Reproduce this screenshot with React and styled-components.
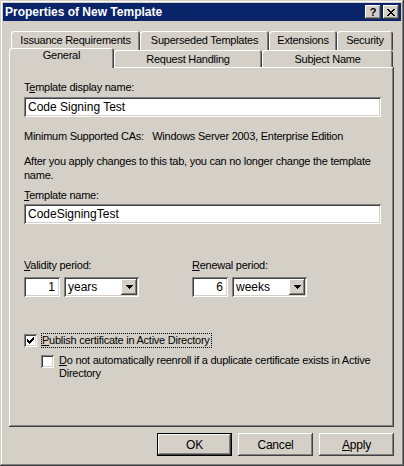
import React from 'react'
import styled, { createGlobalStyle, css } from 'styled-components'

const FACE = '#d4d0c8'
const SHADOW = '#808080'
const DARK = '#404040'
const FONT = '"Liberation Sans", Arial, sans-serif'

const GlobalStyle = createGlobalStyle`
  html, body {
    margin: 0;
    padding: 0;
    background: ${FACE};
  }
  * {
    box-sizing: border-box;
  }
`

const raised = css`
  box-shadow: inset -1px -1px ${DARK}, inset 1px 1px #fff,
    inset -2px -2px ${SHADOW}, inset 2px 2px ${FACE};
`

const sunken = css`
  box-shadow: inset 1px 1px ${SHADOW}, inset -1px -1px #fff,
    inset 2px 2px ${DARK}, inset -2px -2px ${FACE};
`

const Window = styled.div`
  width: 404px;
  height: 466px;
  padding: 3px;
  display: flex;
  flex-direction: column;
  background: ${FACE};
  font-family: ${FONT};
  font-size: 11px;
  letter-spacing: -0.25px;
  color: #000;
  box-shadow: inset -1px -1px ${DARK}, inset 1px 1px ${FACE},
    inset -2px -2px ${SHADOW}, inset 2px 2px #fff;
`

const TitleBar = styled.div`
  height: 18px;
  display: flex;
  align-items: center;
  padding: 0 2px 0 2px;
  background: #0a246a;
  color: #fff;
  font-weight: bold;
  font-size: 12px;
  letter-spacing: 0;
`

const Title = styled.span`
  flex: 1;
  white-space: nowrap;
`

const CaptionButton = styled.div`
  width: 16px;
  height: 14px;
  margin-left: ${(p) => (p.$gap ? '2px' : '0')};
  display: flex;
  align-items: center;
  justify-content: center;
  background: ${FACE};
  color: #000;
  font-weight: bold;
  font-size: 11px;
  line-height: 1;
  ${raised}
`

const Body = styled.div`
  flex: 1;
  display: flex;
  flex-direction: column;
  padding: 10px 7px 0 6px;
`

const TabStrip = styled.div`
  display: flex;
  flex-direction: column;
`

const TabRow = styled.div`
  display: flex;
  align-items: flex-end;
  height: ${(p) => p.$h}px;
  padding-left: ${(p) => p.$indent || 0}px;
`

const Tab = styled.div`
  width: ${(p) => p.$w}px;
  height: ${(p) => (p.$active ? 20 : p.$h)}px;
  display: flex;
  justify-content: center;
  align-items: flex-start;
  padding-top: ${(p) => (p.$active ? 1 : 3)}px;
  line-height: 13px;
  white-space: nowrap;
  background: ${FACE};
  border-radius: 3px 3px 0 0;
  box-shadow: inset 1px 1px #fff, inset -1px 0 ${DARK}, inset -2px 0 ${SHADOW};
  ${(p) =>
    p.$active &&
    css`
      position: relative;
      z-index: 2;
      margin-bottom: -1px;
    `}
`

const Panel = styled.div`
  height: 360px;
  display: flex;
  flex-direction: column;
  padding: 14px 12px 0 15px;
  background: ${FACE};
  box-shadow: inset -1px -1px ${DARK}, inset 1px 1px #fff,
    inset -2px -2px ${SHADOW};
`

const Label = styled.div`
  line-height: ${(p) => p.$lh || 13}px;
  margin-top: ${(p) => p.$mt || 0}px;
  white-space: ${(p) => (p.$wrap ? 'normal' : 'nowrap')};
`

const Key = styled.span`
  text-decoration: underline;
  text-underline-offset: 1px;
`

const TextField = styled.div`
  height: 20px;
  margin-top: ${(p) => p.$mt || 0}px;
  margin-right: 1px;
  width: ${(p) => (p.$w ? `${p.$w}px` : 'auto')};
  display: flex;
  align-items: center;
  justify-content: ${(p) => (p.$right ? 'flex-end' : 'flex-start')};
  padding: 0 ${(p) => (p.$right ? 5 : 4)}px 0 4px;
  background: #fff;
  font-size: 12px;
  letter-spacing: 0;
  ${sunken}
`

const PeriodRow = styled.div`
  display: flex;
  margin-top: 35px;
`

const PeriodGroup = styled.div`
  width: 168px;
  display: flex;
  flex-direction: column;
`

const Fields = styled.div`
  display: flex;
  gap: 3px;
  margin-top: 5px;
`

const Select = styled.div`
  width: 75px;
  height: 20px;
  display: flex;
  align-items: center;
  padding: 2px;
  background: #fff;
  font-size: 12px;
  letter-spacing: 0;
  ${sunken}
`

const SelectText = styled.span`
  flex: 1;
  padding-left: 2px;
`

const DropButton = styled.div`
  width: 16px;
  height: 16px;
  display: flex;
  align-items: center;
  justify-content: center;
  background: ${FACE};
  ${raised}
`

const CheckRow = styled.div`
  display: flex;
  align-items: flex-start;
  margin-top: ${(p) => p.$mt}px;
  padding-left: ${(p) => p.$indent || 0}px;
`

const Box = styled.div`
  width: 13px;
  height: 13px;
  flex: none;
  margin-top: ${(p) => p.$mt || 0}px;
  background: #fff;
  ${sunken}
`

const CheckText = styled.div`
  margin-left: ${(p) => p.$ml}px;
  line-height: ${(p) => p.$lh}px;
  &::first-letter {
    text-decoration: underline;
  }
  ${(p) =>
    p.$focus &&
    css`
      border: 1px dotted #000;
      padding: 0 1px 0 0;
    `}
`

const ButtonRow = styled.div`
  display: flex;
  justify-content: flex-end;
  gap: 6px;
  margin-top: 6px;
`

const Button = styled.div`
  width: 75px;
  height: 23px;
  display: flex;
  align-items: center;
  justify-content: center;
  background: ${FACE};
  font-size: 12px;
  letter-spacing: -0.2px;
  ${raised}
  ${(p) =>
    p.$default &&
    css`
      box-shadow: inset 0 0 0 1px #000, inset -2px -2px ${DARK},
        inset 2px 2px #fff, inset -3px -3px ${SHADOW};
    `}
`

const CheckMark = () => (
  <svg width="13" height="13" viewBox="0 0 13 13" shapeRendering="crispEdges">
    <path
      d="M3 5h1v3h-1z M4 6h1v3h-1z M5 7h1v3h-1z M6 6h1v3h-1z M7 5h1v3h-1z M8 4h1v3h-1z M9 3h1v3h-1z"
      fill="#000"
    />
  </svg>
)

const Arrow = () => (
  <svg width="7" height="4" viewBox="0 0 7 4" shapeRendering="crispEdges">
    <path d="M0 0h7v1h-1v1h-1v1h-1v1h-1v-1h-1v-1h-1v-1h-1z" fill="#000" />
  </svg>
)

const CloseGlyph = () => (
  <svg width="8" height="7" viewBox="0 0 8 7" shapeRendering="crispEdges">
    <path
      d="M0 0h2v1h-2z M6 0h2v1h-2z M1 1h2v1h-2z M5 1h2v1h-2z M2 2h4v1h-4z M3 3h2v1h-2z M2 4h4v1h-4z M1 5h2v1h-2z M5 5h2v1h-2z M0 6h2v1h-2z M6 6h2v1h-2z"
      fill="#000"
    />
  </svg>
)

const upperTabs = [
  ['Issuance Requirements', 129],
  ['Superseded Templates', 129],
  ['Extensions', 68],
  ['Security', 56],
]

const lowerTabs = [
  ['General', 105, true],
  ['Request Handling', 148],
  ['Subject Name', 131],
]

const Period = ({ label, hotkey, value, unit }) => (
  <PeriodGroup>
    <Label>
      <Key>{hotkey}</Key>
      {label}
    </Label>
    <Fields>
      <TextField $w={36} $right>
        {value}
      </TextField>
      <Select>
        <SelectText>{unit}</SelectText>
        <DropButton>
          <Arrow />
        </DropButton>
      </Select>
    </Fields>
  </PeriodGroup>
)

export default function App() {
  return (
    <>
      <GlobalStyle />
      <Window>
        <TitleBar>
          <Title>Properties of New Template</Title>
          <CaptionButton>?</CaptionButton>
          <CaptionButton $gap>
            <CloseGlyph />
          </CaptionButton>
        </TitleBar>
        <Body>
          <TabStrip>
            <TabRow $h={19} $indent={2}>
              {upperTabs.map(([name, w]) => (
                <Tab key={name} $w={w} $h={19}>
                  {name}
                </Tab>
              ))}
            </TabRow>
            <TabRow $h={17}>
              {lowerTabs.map(([name, w, active]) => (
                <Tab key={name} $w={w} $h={17} $active={active}>
                  {name}
                </Tab>
              ))}
            </TabRow>
          </TabStrip>
          <Panel>
            <Label>
              T<Key>e</Key>mplate display name:
            </Label>
            <TextField $mt={3}>Code Signing Test</TextField>
            <Label $mt={13}>
              Minimum Supported CAs:&nbsp;&nbsp; Windows Server 2003, Enterprise Edition
            </Label>
            <Label $mt={11} $lh={14} $wrap>
              After you apply changes to this tab, you can no longer change the template
              name.
            </Label>
            <Label $mt={7}>
              <Key>T</Key>emplate name:
            </Label>
            <TextField $mt={2}>CodeSigningTest</TextField>
            <PeriodRow>
              <Period label="alidity period:" hotkey="V" value="1" unit="years" />
              <Period label="enewal period:" hotkey="R" value="6" unit="weeks" />
            </PeriodRow>
            <CheckRow $mt={36}>
              <Box $mt={1}>
                <CheckMark />
              </Box>
              <CheckText $ml={4} $lh={13} $focus>
                Publish certificate in Active Directory
              </CheckText>
            </CheckRow>
            <CheckRow $mt={6} $indent={17}>
              <Box $mt={1} />
              <CheckText $ml={5} $lh={13}>
                Do not automatically reenroll if a duplicate certificate exists in Active
                Directory
              </CheckText>
            </CheckRow>
          </Panel>
          <ButtonRow>
            <Button $default>OK</Button>
            <Button>Cancel</Button>
            <Button>
              <span>
                <Key>A</Key>pply
              </span>
            </Button>
          </ButtonRow>
        </Body>
      </Window>
    </>
  )
}
